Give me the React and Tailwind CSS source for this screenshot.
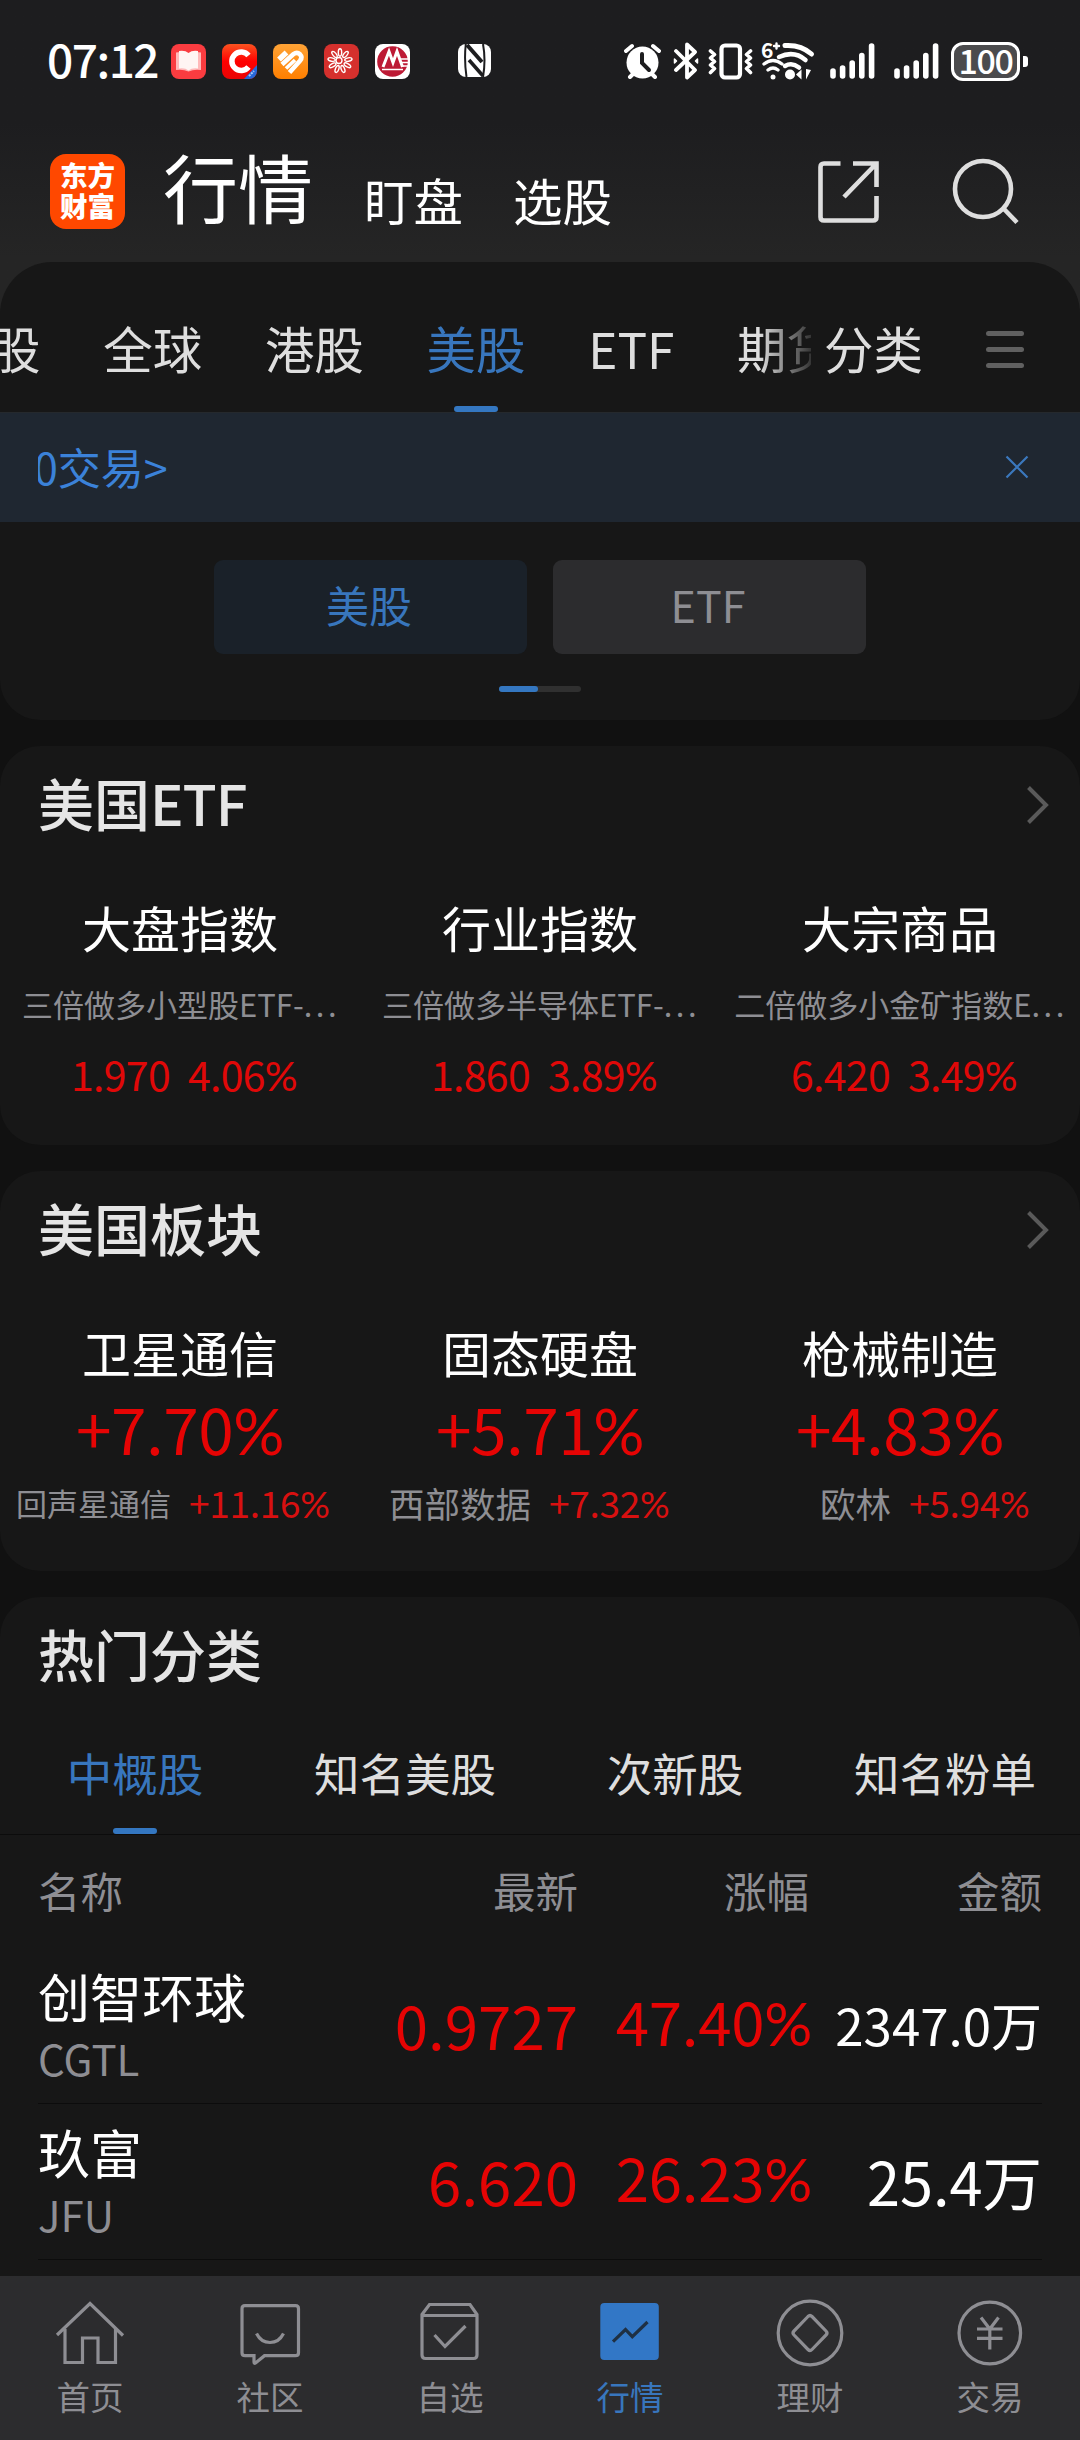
import clsx from "clsx";

const marketTabs = ["股", "全球", "港股", "美股", "ETF", "期货"];

const etfs = [
  { name: "大盘指数", fund: "三倍做多小型股ETF-", price: "1.970", change: "4.06%" },
  { name: "行业指数", fund: "三倍做多半导体ETF-", price: "1.860", change: "3.89%" },
  { name: "大宗商品", fund: "二倍做多小金矿指数E", price: "6.420", change: "3.49%" },
];

const sectors = [
  { name: "卫星通信", change: "+7.70%", leader: "回声星通信", leaderChange: "+11.16%", small: true },
  { name: "固态硬盘", change: "+5.71%", leader: "西部数据", leaderChange: "+7.32%" },
  { name: "枪械制造", change: "+4.83%", leader: "欧林", leaderChange: "+5.94%" },
];

const stockTabs = ["中概股", "知名美股", "次新股", "知名粉单"];

const stocks = [
  { name: "创智环球", code: "CGTL", price: "0.9727", change: "47.40%", amount: "2347.0万", small: true },
  { name: "玖富", code: "JFU", price: "6.620", change: "26.23%", amount: "25.4万" },
];

// Digits in the CJK face, the percent sign in a narrower one
function Percent({ value, className }) {
  return (
    <span className={clsx("whitespace-nowrap", className)}>
      {value.replace("%", "")}
      <span className="font-['Lato']">%</span>
    </span>
  );
}

function SignalIcon({ className }) {
  return (
    <svg width="45" height="36" viewBox="0 0 45 36" className={className} stroke="#fff" strokeWidth="5.6" strokeLinecap="round">
      <path d="M3 28v5M12.6 25v8M22.2 20v13M31.8 12.500v20.500M41.600 3v30" />
    </svg>
  );
}

function StatusBar() {
  return (
    <div className="flex h-[122px] items-center pl-[47px] text-white">
      <span className="mb-[6px] w-[124px] text-[46px] font-medium leading-none tracking-[-1.5px]">07:12</span>
      <div className="flex gap-4">
        <svg width="35" height="35" viewBox="0 0 35 35">
          <rect width="35" height="35" rx="8" fill="#fa3c40" />
          <path d="M5 8.500q7-1.500 12.500 1.500Q23 7 30 8.500V26q-7-1-12.500 1.500Q12 25 5 26z" fill="#ffb9b9" />
          <path d="M8 7q6-1 9.500 2Q21 6 27 7v17.500q-6-1-9.500 2-3.500-3-9.500-2z" fill="#fff5f3" />
        </svg>
        <svg width="35" height="35" viewBox="0 0 35 35">
          <defs>
            <clipPath id="c-clip"><rect width="35" height="35" rx="8" /></clipPath>
            <linearGradient id="c-bg" x2="0" y2="1">
              <stop stopColor="#fb5320" />
              <stop offset=".5" stopColor="#f00" />
              <stop offset="1" stopColor="#e80505" />
            </linearGradient>
          </defs>
          <g clipPath="url(#c-clip)">
            <rect width="35" height="35" fill="url(#c-bg)" />
            <path d="M35 21v14H22z" fill="#2567d8" />
            <path d="M27 32l5-5" stroke="#a9c6f7" strokeWidth="2" strokeDasharray="2 1" />
          </g>
          <path d="M26.500 11.500a9.300 9.300 0 1 0 0 11.500" fill="none" stroke="#fff" strokeWidth="5.500" />
        </svg>
        <svg width="35" height="35" viewBox="0 0 35 35">
          <defs>
            <linearGradient id="s-bg" x2="0" y2="1">
              <stop stopColor="#ffa336" />
              <stop offset="1" stopColor="#ff7f00" />
            </linearGradient>
          </defs>
          <rect width="35" height="35" rx="8" fill="url(#s-bg)" />
          <g fill="none" stroke="#fff" strokeWidth="4.600">
            <path d="M6 15.500l7.500-7" strokeWidth="5.500" />
            <path d="M9 20.500L20.500 10q3.500-2.500 6.500.300 3 3 0 6.500L16.500 28.500" />
            <path d="M13 24.500l9-8.500" strokeWidth="3.600" />
          </g>
        </svg>
        <svg width="35" height="35" viewBox="0 0 35 35">
          <rect width="35" height="35" rx="8" fill="#d5302d" />
          <g fill="none" stroke="#fff" strokeWidth="1.400">
            <circle cx="15" cy="16.500" r="3" />
            {[0, 40, 80, 120, 160, 200, 240, 280, 320].map((a) => (
              <ellipse key={a} cx="16" cy="8.500" rx="1.700" ry="3.700" transform={`rotate(${a} 16 17)`} />
            ))}
          </g>
        </svg>
        <svg width="35" height="35" viewBox="0 0 35 35">
          <rect width="35" height="35" rx="8" fill="#fff" />
          <circle cx="17.500" cy="17.500" r="15.300" fill="#bd1a35" />
          <path d="M8 23L14 7.500l4 11 4-11 5.500 15.500" fill="none" stroke="#fff" strokeWidth="3" />
          <path d="M7 25.500h21M26 15h8M27 18.500h7M28 22h6" stroke="#fff" strokeWidth="1.700" />
        </svg>
      </div>
      <svg width="33" height="33" viewBox="0 0 33 33" className="mb-px ml-[48px]">
        <rect width="33" height="33" rx="8" fill="#fff" />
        <g fill="none" stroke="#1d1d1f">
          <path d="M7.800 0Q6 16 8.500 33" strokeWidth="2" />
          <path d="M25 0q3 16 0 33" strokeWidth="2" />
          <path d="M9 1l15 17" strokeWidth="4" />
          <path d="M11 16l14 16" strokeWidth="3.500" />
        </g>
      </svg>

      <svg width="37" height="36" viewBox="0 0 37 36" className="ml-[133px]">
        <circle cx="18.500" cy="19.500" r="16" fill="#fff" />
        <path d="M2 8l6-5M35 8l-6-5M6 34l5-5M31 34l-5-5" stroke="#fff" strokeWidth="4" strokeLinecap="round" />
        <path d="M18 11v9l7 7" fill="none" stroke="#1d1d1f" strokeWidth="4" strokeLinecap="round" />
      </svg>
      <svg width="26" height="38" viewBox="0 0 26 38" className="ml-[12px]" fill="none" stroke="#fff" strokeWidth="3.800" strokeLinejoin="round" strokeLinecap="round">
        <path d="M3 9l19 19-8 7.500V2.500L22 10 3 28" />
        <path d="M1.500 17v4l2-2zM24.500 17v4l-2-2z" strokeWidth="1.500" fill="#fff" />
      </svg>
      <svg width="45" height="37" viewBox="0 0 45 37" className="ml-[9px]" fill="none" stroke="#fff" strokeWidth="3.600" strokeLinecap="round" strokeLinejoin="round">
        <rect x="13.500" y="2.500" width="18.500" height="32" rx="3.500" strokeWidth="4.200" />
        <path d="M2.500 8l4 3.500-4 3.500 4 3.500-4 3.500 4 3.500-4 4M42.500 8l-4 3.500 4 3.500-4 3.500 4 3.500-4 3.500 4 4" />
      </svg>
      <svg width="52" height="40" viewBox="0 0 52 40" className="ml-[9px] overflow-visible" fill="none" stroke="#fff" strokeLinecap="round">
        <path d="M23 4.500q16-1 26.500 8.500" strokeWidth="5" />
        <path d="M17 16q15-7 26.500 3" strokeWidth="4.500" />
        <path d="M23 25q7-4 14 1.500" strokeWidth="4.500" />
        <path d="M2 23q9-7 18 0M6 29q5-4 10 0" strokeWidth="3.300" />
        <circle cx="11" cy="36" r="2.500" fill="#fff" stroke="none" />
        <circle cx="28" cy="33.500" r="5" fill="#fff" stroke="none" />
        <path d="M34 33.500l5.500-5v10zM49 29l-5-1v10.500z" fill="#fff" stroke="none" />
        <text x="-1" y="16.500" fill="#fff" stroke="none" fontSize="21" fontWeight="700" fontFamily="Noto Sans CJK SC">6</text>
        <path d="M12 5h5M14.500 2.500v5" strokeWidth="2.400" />
      </svg>
      <SignalIcon className="ml-[16px]" />
      <SignalIcon className="ml-[19px]" />
      <div className="ml-[12px] flex h-[39px] w-[69px] items-center justify-center rounded-[12px] border-[3px] border-white bg-[#4b4b4d]">
        <span className="mb-[3px] text-[34px] font-medium leading-none tracking-[-1.3px]">100</span>
      </div>
      <div className="ml-[3px] h-[11px] w-[5px] rounded-r-[3px] bg-white" />
    </div>
  );
}

function Header() {
  return (
    <header className="flex h-[140px] items-start pt-8 pl-[50px] text-white">
      <div className="flex h-[75px] w-[75px] flex-col items-center justify-center rounded-[16px] bg-[#ff4800] pb-[3px] text-[27.5px] font-black leading-[31px]">
        <span>东方</span>
        <span>财富</span>
      </div>
      <h1 className="-mt-[5px] ml-[38px] text-[75px] leading-[74px]">行情</h1>
      <span className="mt-[21px] ml-[51px] text-[49.5px] leading-[49px]">盯盘</span>
      <span className="mt-[21px] ml-[50px] text-[49.5px] leading-[49px]">选股</span>
      <svg width="64" height="64" viewBox="0 0 64 64" className="mt-[5px] ml-[204px]" fill="none" stroke="#dedede" strokeWidth="4.600">
        <path d="M24.500 4.500H8Q4.500 4.500 4.500 8v50q0 3.500 3.500 3.500h49q3.500 0 3.500-3.500V37" />
        <path d="M37 4.500h23.500V28M60 5L28 38" />
      </svg>
      <svg width="68" height="68" viewBox="0 0 68 68" className="mt-[3px] ml-[72px]" fill="none" stroke="#dedede" strokeWidth="4.600">
        <circle cx="31" cy="32" r="28" />
        <path d="M51 51l14 14.500" />
      </svg>
    </header>
  );
}

function MarketPanel() {
  return (
    <section className="h-[458px] rounded-t-[52px] rounded-b-[40px] bg-[#171717]">
      <nav className="flex h-[151px] border-b border-[#25292d] text-[49.5px] leading-[49px] text-[#dedede]">
        <div className="relative flex w-[811px] gap-[62.7px] overflow-hidden whitespace-nowrap">
          {marketTabs.map((tab, i) => (
            <div
              key={tab}
              className={clsx("flex shrink-0 flex-col items-center pt-[61px]", i === 0 && "-ml-[9px]", tab === "美股" && "text-[#3876bd]")}
            >
              {tab}
              {tab === "美股" && <i className="mt-auto h-[6px] w-[44px] rounded-full bg-[#3477c1]" />}
            </div>
          ))}
          <div className="absolute inset-y-0 right-0 w-[52px] bg-linear-to-r from-transparent to-[#171717]/85" />
        </div>
        <span className="ml-[13px] pt-[61px]">分类</span>
        <div className="mt-[69px] ml-[63px] flex flex-col gap-[11px]">
          <i className="h-[5px] w-[38px] rounded-full bg-[#606060]" />
          <i className="h-[5px] w-[38px] rounded-full bg-[#606060]" />
          <i className="h-[5px] w-[38px] rounded-full bg-[#606060]" />
        </div>
      </nav>

      <div className="flex h-[109px] items-center justify-between bg-[#1f2731] pr-[51px] pl-[38px]">
        <div className="overflow-hidden pb-[4px]">
          <div className="-ml-[4px] text-[43px] leading-[50px] text-[#3b82d9]">0交易&gt;</div>
        </div>
        <svg width="24" height="24" viewBox="0 0 24 24" className="mb-px" stroke="#3b78bd" strokeWidth="2.200">
          <path d="M1.500 1.500l21 21M22.500 1.500l-21 21" />
        </svg>
      </div>

      <div className="mt-[38px] flex justify-center gap-[26px] text-[43px] leading-[89px]">
        <div className="h-[94px] w-[313px] rounded-[9px] bg-[#1a2129] pr-[3px] text-center text-[#3876bd]">美股</div>
        <div className="h-[94px] w-[313px] rounded-[9px] bg-[#2c2c2e] pr-[3px] text-center text-[#8e8e93]">ETF</div>
      </div>
      <div className="mx-auto mt-[32px] h-[6px] w-[82px] rounded-full bg-[#303030]">
        <div className="h-full w-[39px] rounded-full bg-[#3477c1]" />
      </div>
    </section>
  );
}

function CardTitle({ children, arrow = true }) {
  return (
    <div className="flex h-[114px] items-center justify-between pr-[30px] pl-[38px]">
      <h2 className="mb-[2px] text-[56px] font-medium leading-[56px] text-[#e5e5e5]">{children}</h2>
      {arrow && (
        <svg width="24" height="40" viewBox="0 0 24 40" className="mt-1" fill="none" stroke="#5a5a5a" strokeWidth="4">
          <path d="M2.500 2.500L20 20 2.500 37.500" />
        </svg>
      )}
    </div>
  );
}

function EtfCard() {
  return (
    <section className="mt-[26px] h-[399px] rounded-[40px] bg-[#171717]">
      <CardTitle>
        美国<span className="tracking-[-1px]">ETF</span>
      </CardTitle>
      <div className="grid grid-cols-3 pt-[42px]">
        {etfs.map((e) => (
          <div key={e.name} className="flex flex-col items-center whitespace-nowrap">
            <div className="text-[49px] leading-[50px] text-white">{e.name}</div>
            <div className="mt-[36px] pl-[2px] text-[31px] leading-[32px] text-[#8e8e93]">
              {e.fund}
              <span className="tracking-[3.5px]">...</span>
            </div>
            <div className="mt-[32px] flex gap-[18px] pl-[8px] text-[41px] leading-[42px] tracking-[-0.7px] text-[#e00808]">
              <span>{e.price}</span>
              <Percent value={e.change} />
            </div>
          </div>
        ))}
      </div>
    </section>
  );
}

function SectorCard() {
  return (
    <section className="mt-[26px] h-[400px] rounded-[40px] bg-[#171717]">
      <CardTitle>美国板块</CardTitle>
      <div className="grid grid-cols-3 pt-[42px]">
        {sectors.map((s) => (
          <div key={s.name} className="flex flex-col items-center whitespace-nowrap">
            <div className="text-[49px] leading-[50px] text-white">{s.name}</div>
            <Percent value={s.change} className="mt-[18px] text-[64px] leading-[65px] tracking-[-0.5px] text-[#e60404]" />
            <div className="mt-[20px] flex h-[40px] w-full items-center">
              <span className={clsx("w-[171px] text-right text-[#8e8e93]", s.small ? "text-[31px]" : "text-[35.5px]")}>{s.leader}</span>
              <Percent value={s.leaderChange} className="ml-[18px] text-[37px] tracking-[-0.3px] text-[#d81010]" />
            </div>
          </div>
        ))}
      </div>
    </section>
  );
}

function HotCard() {
  return (
    <section className="mt-[26px] h-[679px] rounded-t-[40px] bg-[#171717]">
      <CardTitle arrow={false}>热门分类</CardTitle>
      <div className="grid h-[124px] grid-cols-4 border-b border-[#0c0c0c] text-[45.5px] leading-[46px] text-[#dedede]">
        {stockTabs.map((tab, i) => (
          <div key={tab} className={clsx("flex flex-col items-center pt-[38px]", i === 0 && "text-[#3876bd]")}>
            {tab}
            {i === 0 && <i className="mt-auto h-[6px] w-[44px] rounded-full bg-[#3477c1]" />}
          </div>
        ))}
      </div>
      <div className="mx-[38px] grid h-[113px] grid-cols-[1fr_231px_233px] items-center pb-[3px] text-right text-[42.5px] leading-none text-[#8e8e93]">
        <div className="flex justify-between">
          <span>名称</span>
          <span>最新</span>
        </div>
        <span>涨幅</span>
        <span>金额</span>
      </div>
      {stocks.map((s) => (
        <div
          key={s.code}
          className="mx-[38px] grid h-[156px] grid-cols-[1fr_231px_233px] items-center border-b border-[#0c0c0c] text-right text-[60px] leading-[60px] text-[#e60404]"
        >
          <div className="flex items-center justify-between">
            <div className="-mt-[2px] text-left">
              <div className="text-[52px] leading-[52px] text-white">{s.name}</div>
              <div className="mt-[15px] text-[42px] leading-[42px] text-[#8e8e93]">{s.code}</div>
            </div>
            <span className="mb-[4px]">{s.price}</span>
          </div>
          <Percent value={s.change} className="-mr-[3px] mb-[8px] tracking-[-0.3px]" />
          <span className={clsx("mb-[4px] whitespace-nowrap text-white", s.small ? "text-[51px]" : "text-[59.5px]")}>{s.amount}</span>
        </div>
      ))}
    </section>
  );
}

const navItems = [
  {
    label: "首页",
    icon: <path d="M2 36L35 4.500 68 36.500M10 30v33.500h17.500V39H43v24.500h17.500V30" />,
  },
  {
    label: "社区",
    icon: (
      <>
        <path d="M19 56.700h-9q-3 0-3-3v-44q0-3 3-3h50.500q3 0 3 3v44q0 3-3 3h-31L20.500 64Q19 65 19 63z" />
        <path d="M21.500 34.500q4.500 9 13.500 9t13.500-9" />
      </>
    ),
  },
  {
    label: "自选",
    icon: (
      <>
        <path d="M7 15.500L14.500 5.500H55l7 10V56q0 3.500-3.500 3.500h-48Q7 59.500 7 56zM7 16.500h55" />
        <path d="M19.500 36L30 47.500 50.500 27" />
      </>
    ),
  },
  {
    label: "行情",
    active: true,
    icon: (
      <>
        <rect x="5.300" y="4" width="58.500" height="57" rx="4" fill="#3277c6" stroke="none" />
        <path d="M18 42.700L30.500 30.500l6.800 7.200L52.500 23" stroke="#1f3043" />
      </>
    ),
  },
  {
    label: "理财",
    icon: (
      <>
        <circle cx="35" cy="34" r="31.800" />
        <path d="M33 17.500q2-2 4 0l14 14.500q2 2 0 4L37 50.500q-2 2-4 0L19 36q-2-2 0-4z" />
      </>
    ),
  },
  {
    label: "交易",
    icon: (
      <>
        <circle cx="34.800" cy="34" r="30.800" />
        <path d="M26 18.500L34.800 30l8.700-11.500M34.800 30v20.500M22 30h25.500M22 39.300h25.500" />
      </>
    ),
  },
];

function BottomNav() {
  return (
    <nav className="grid h-[164px] grid-cols-6 bg-[#2c2c2e] pt-[23px]">
      {navItems.map((item) => (
        <div key={item.label} className={clsx("flex flex-col items-center", item.active ? "text-[#3876bd]" : "text-[#8e8e93]")}>
          <svg width="70" height="68" viewBox="0 0 70 68" fill="none" stroke="currentColor" strokeWidth="3.200">
            {item.icon}
          </svg>
          <span className="mt-[12px] text-[33.5px] leading-[34px]">{item.label}</span>
        </div>
      ))}
    </nav>
  );
}

export default function App() {
  return (
    <div className="h-[2440px] w-[1080px] overflow-hidden bg-[#111111] font-['Noto_Sans_CJK_SC',sans-serif]">
      <div className="-mb-[60px] h-[322px] bg-linear-to-b from-[#1d1d1f] from-38% to-[#252525] to-80%">
        <StatusBar />
        <Header />
      </div>
      <MarketPanel />
      <EtfCard />
      <SectorCard />
      <HotCard />
      <BottomNav />
    </div>
  );
}
